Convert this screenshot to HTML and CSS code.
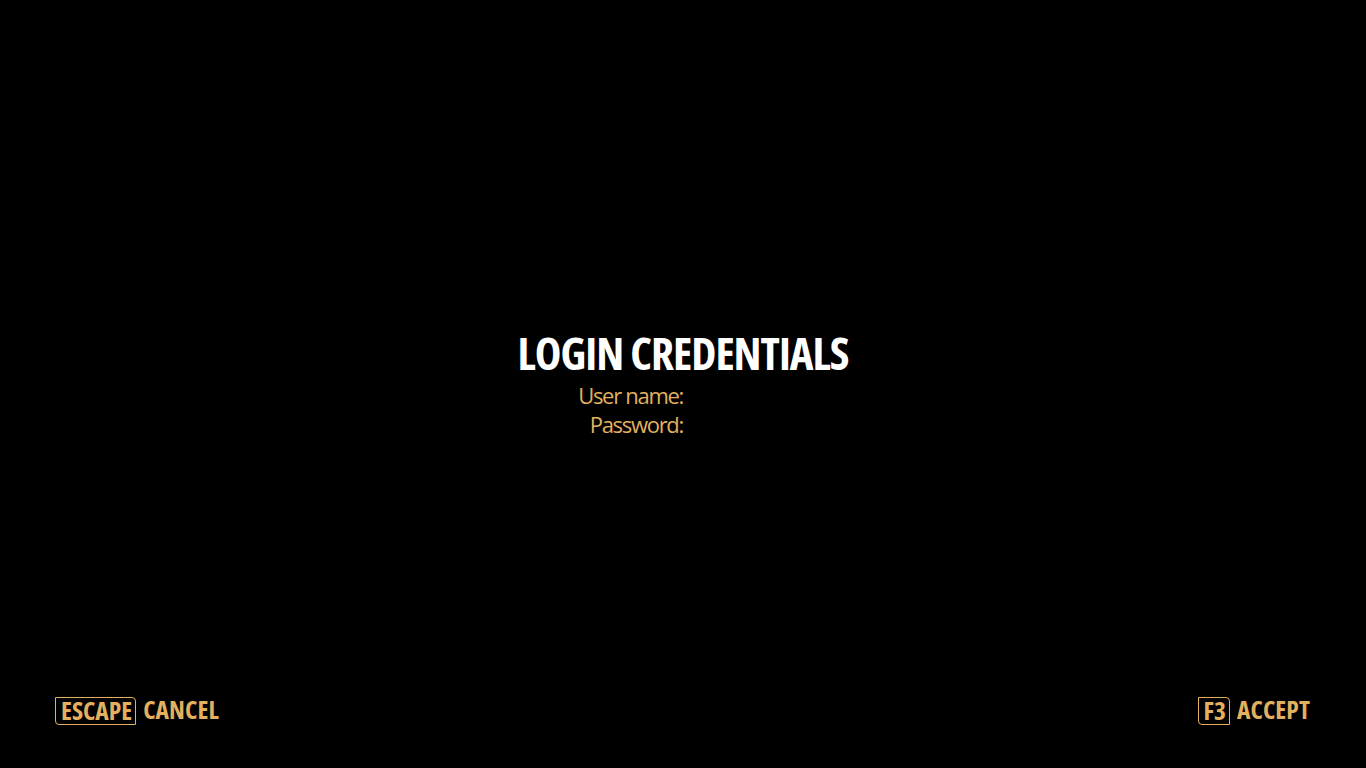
FILE: index.html
```html
<!DOCTYPE html>
<html>
<head>
<meta charset="utf-8">
<link rel="stylesheet" href="styles.css">
</head>
<body>
<div class="screen">
  <main class="center">
    <h1 class="title">LOGIN CREDENTIALS</h1>
    <div class="form">
      <div class="label">User name:</div><div class="value"></div>
      <div class="label">Password:</div><div class="value"></div>
    </div>
  </main>
  <footer class="footer">
    <div class="action"><span class="key">ESCAPE</span><span class="act">CANCEL</span></div>
    <div class="action"><span class="key">F3</span><span class="act">ACCEPT</span></div>
  </footer>
</div>
</body>
</html>
```
FILE: styles.css
```css
html, body {
  margin: 0;
  padding: 0;
  background: #000;
}
.screen {
  width: 1366px;
  height: 768px;
  display: flex;
  flex-direction: column;
  background: #000;
}
.center {
  flex: 1;
  display: flex;
  flex-direction: column;
  align-items: center;
  padding-top: 329px;
}
.title {
  margin: 0;
  font-family: "Open Sans", sans-serif;
  font-stretch: 75%;
  font-weight: bold;
  font-size: 45px;
  line-height: 48px;
  letter-spacing: -1px;
  color: #fff;
}
.form {
  display: grid;
  grid-template-columns: 683px 683px;
  width: 1366px;
  margin-top: 4px;
}
.label {
  text-align: right;
  font-family: "Open Sans", sans-serif;
  font-size: 22px;
  line-height: 29px;
  letter-spacing: -1.3px;
  color: #e2b05f;
}
.footer {
  display: flex;
  justify-content: space-between;
  padding: 0 56px 43px 55px;
}
.action {
  display: flex;
  align-items: flex-start;
  gap: 7px;
  font-family: "Open Sans", sans-serif;
  font-stretch: 75%;
  font-weight: bold;
  font-size: 25.5px;
  line-height: 24px;
  color: #e2b05f;
}
.key {
  border: 1px solid #e2b05f;
  border-radius: 0 4px 0 4px;
  padding: 0 3px 2px 5px;
}
.act {
  padding-top: 0;
  letter-spacing: 0.1px;
}
```
